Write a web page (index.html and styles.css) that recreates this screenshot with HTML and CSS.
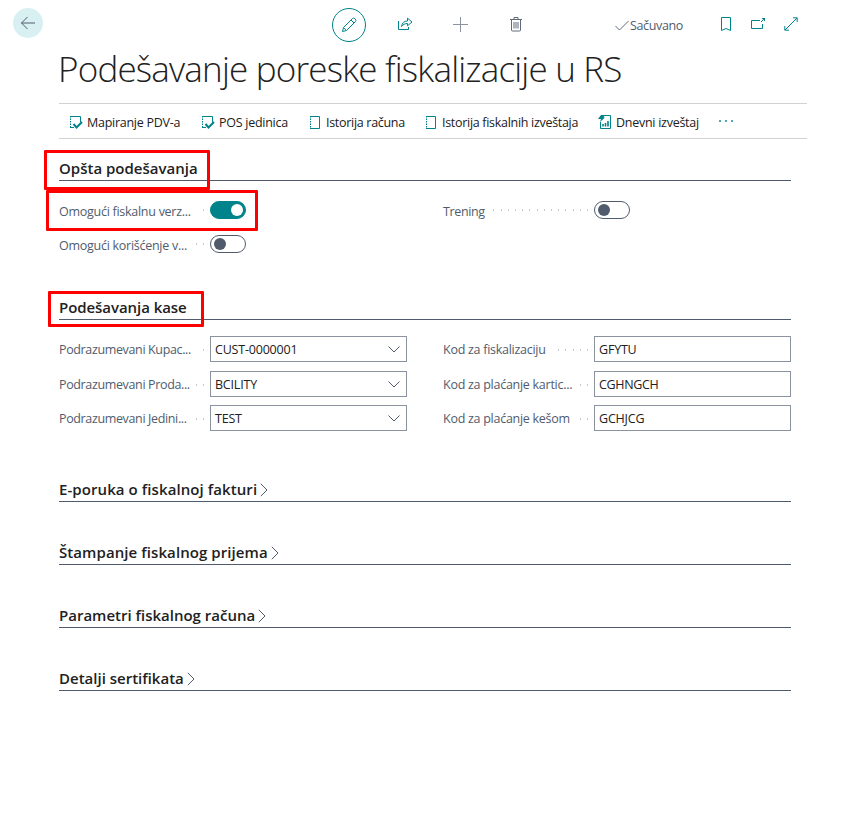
FILE: index.html
```html
<!DOCTYPE html>
<html lang="sr-Latn">
<head>
<meta charset="utf-8">
<title>Podešavanje poreske fiskalizacije u RS</title>
<link rel="stylesheet" href="styles.css">
</head>
<body>
<div class="page">
  <header class="topbar">
    <button class="back" aria-label="Nazad"><svg width="16" height="14" viewBox="0 0 16 14"><path d="M1.500 7H15M7.500 1 1.500 7l6 6"/></svg></button>
    <button class="edit" aria-label="Uredi"><svg width="16" height="16" viewBox="0 0 16 16"><path d="M1.500 14.500l1-4L11.300 1.700a1.800 1.800 0 0 1 2.600 0l.4.4a1.800 1.800 0 0 1 0 2.600L5.500 13.500zM2.500 10.500l3 3M10 3l3 3"/></svg></button>
    <svg class="ico share" width="15" height="14" viewBox="0 0 15 14"><path d="M.5 4v8.500h10V10M3.500 9.500C4 6 6 4 9.500 4V1.200L14 5 9.500 8.800V6.500C7 6.500 5 7.500 3.500 9.500z"/></svg>
    <svg class="ico gray plus" width="15" height="15" viewBox="0 0 15 15"><path d="M7.500 0v15M0 7.500h15"/></svg>
    <svg class="ico dark trash" width="12" height="15" viewBox="0 0 12 15"><path d="M0 2.500h12M4 2.500v-2h4v2M1.500 2.500v10.500q0 1 1 1h7q1 0 1-1V2.500M4 5v6.500M6 5v6.500M8 5v6.500"/></svg>
    <svg class="ico dark check" width="14" height="11" viewBox="0 0 14 11"><path d="M.5 6l4 4L13.500 1"/></svg>
    <span class="saved">Sačuvano</span>
    <svg class="ico mark" width="10" height="14" viewBox="0 0 10 14"><path d="M.5.5h9v13L5 11.500.5 13.500z"/></svg>
    <svg class="ico pop" width="15" height="12" viewBox="0 0 15 12"><path d="M9 2.500H.5v8h11V6M10 4l2.500-2.500"/><path class="fill" d="M10.500 0H14v3.500z"/></svg>
    <svg class="ico full" width="14" height="14" viewBox="0 0 14 14"><path d="M1 13L13 1M9 .8h4.200V5M.8 9v4.200H5"/></svg>
  </header>
  <h1>Podešavanje poreske fiskalizacije u RS</h1>
  <nav class="actions">
    <a class="a1"><svg class="ico" width="14" height="15" viewBox="0 0 14 15"><path d="M1 1.500h10.500v6M1 12.500h4"/><path class="dash" d="M1.500 1v12"/><path class="bold" d="M4.500 9l3 3.500L13 7"/></svg><span>Mapiranje PDV-a</span></a>
    <a class="a2"><svg class="ico" width="14" height="15" viewBox="0 0 14 15"><path d="M1 1.500h10.500v6M1 12.500h4"/><path class="dash" d="M1.500 1v12"/><path class="bold" d="M4.500 9l3 3.500L13 7"/></svg><span>POS jedinica</span></a>
    <a class="a3"><svg class="ico" width="12" height="15" viewBox="0 0 12 15"><path d="M1 1.500h9.500v12H1"/><path class="dash" d="M1.500 1v13"/></svg><span>Istorija računa</span></a>
    <a class="a4"><svg class="ico" width="12" height="15" viewBox="0 0 12 15"><path d="M1 1.500h9.500v12H1"/><path class="dash" d="M1.500 1v13"/></svg><span>Istorija fiskalnih izveštaja</span></a>
    <a class="a5"><svg class="ico" width="14" height="16" viewBox="0 0 14 16"><path d="M6 1.500h6.500v13H2.500V8"/><path class="bars" d="M5 12.500V10M7.500 12.500V9M10 12.500V7"/><path class="fill" d="M3 1h4L5.500 3.500H7L2 8l1-3H0z"/></svg><span>Dnevni izveštaj</span></a>
    <span class="more"><i></i><i></i><i></i></span>
  </nav>
  <main>
    <section class="group general">
      <h2><span>Opšta podešavanja</span></h2>
      <div class="fields switches">
        <div class="field"><label>Omogući fiskalnu verz...</label><i class="dots"></i><span class="control"><span class="toggle on"></span></span></div>
        <div class="field"><label class="tight">Trening</label><i class="dots"></i><span class="control"><span class="toggle"></span></span></div>
        <div class="field"><label>Omogući korišćenje v...</label><i class="dots"></i><span class="control"><span class="toggle"></span></span></div>
      </div>
    </section>
    <section class="group register">
      <h2><span class="kase">Podešavanja kase</span></h2>
      <div class="fields boxes">
        <div class="field"><label class="tight">Podrazumevani Kupac...</label><i class="dots"></i><span class="control box"><span>CUST-0000001</span><svg width="12" height="7" viewBox="0 0 12 7"><path d="M.5.5L6 6 11.500.5"/></svg></span></div>
        <div class="field"><label>Kod za fiskalizaciju</label><i class="dots"></i><span class="control box"><span>GFYTU</span></span></div>
        <div class="field"><label class="tight">Podrazumevani Proda...</label><i class="dots"></i><span class="control box"><span>BCILITY</span><svg width="12" height="7" viewBox="0 0 12 7"><path d="M.5.5L6 6 11.500.5"/></svg></span></div>
        <div class="field"><label>Kod za plaćanje kartic...</label><i class="dots"></i><span class="control box"><span class="snug">CGHNGCH</span></span></div>
        <div class="field"><label class="tight">Podrazumevani Jedini...</label><i class="dots"></i><span class="control box"><span>TEST</span><svg width="12" height="7" viewBox="0 0 12 7"><path d="M.5.5L6 6 11.500.5"/></svg></span></div>
        <div class="field"><label>Kod za plaćanje kešom</label><i class="dots"></i><span class="control box"><span>GCHJCG</span></span></div>
      </div>
    </section>
    <section class="folded"><h2><span class="wide">E-poruka o fiskalnoj fakturi</span><svg width="8" height="14" viewBox="0 0 8 14"><path d="M.8.8L7 7 .8 13.200"/></svg></h2></section>
    <section class="folded"><h2><span class="wide">Štampanje fiskalnog prijema</span><svg width="8" height="14" viewBox="0 0 8 14"><path d="M.8.8L7 7 .8 13.200"/></svg></h2></section>
    <section class="folded"><h2><span>Parametri fiskalnog računa</span><svg width="8" height="14" viewBox="0 0 8 14"><path d="M.8.8L7 7 .8 13.200"/></svg></h2></section>
    <section class="folded"><h2><span>Detalji sertifikata</span><svg width="8" height="14" viewBox="0 0 8 14"><path d="M.8.8L7 7 .8 13.200"/></svg></h2></section>
  </main>
  <div class="mark-box m1"></div>
  <div class="mark-box m2"></div>
  <div class="mark-box m3"></div>
</div>
</body>
</html>
```
FILE: styles.css
```css
* { box-sizing: border-box; }
body { margin: 0; background: #fff; color: #212121; font: 12.500px/18px "Open Sans", "Noto Sans", sans-serif; }
.page { position: relative; height: 816px; }
svg { display: block; flex: none; fill: none; stroke: #505c6d; stroke-width: 1; }
.ico { stroke: #00838a; }
.ico.gray { stroke: #8b93a0; }
.ico.dark { stroke: #606a7a; }
.dash { stroke-dasharray: 1.500 1; }
.ico .bold { stroke-width: 2; }
.ico .bars { stroke-width: 1.600; }
.ico .fill { fill: #00838a; stroke: none; }

.topbar { display: flex; align-items: flex-start; height: 48px; padding-left: 13px; }
.back, .edit { display: flex; align-items: center; justify-content: center; padding: 0; border: 0; border-radius: 50%; }
.back { width: 30px; height: 30px; margin-top: 8px; background: #d9f0f2; }
.edit { width: 34px; height: 34px; margin: 8px 0 0 289px; background: #fff; border: 1px solid #00838a; }
.edit svg { stroke: #00838a; }
.share { margin: 17px 0 0 32px; }
.plus { margin: 17px 0 0 40px; }
.trash { margin: 17px 0 0 42px; }
.check { margin: 20px 0 0 93px; }
.saved { width: 92px; margin-top: 17px; padding-left: 1px; color: #505c6d; letter-spacing: -.35px; }
.mark { margin-top: 17px; }
.pop { margin: 18px 0 0 20px; }
.full { margin: 17px 0 0 18px; }

h1 { height: 55px; margin: 0; padding-left: 58px; font-size: 35px; font-weight: 300; line-height: 41px; letter-spacing: -.81px; white-space: nowrap; }
.actions { display: flex; width: 748px; height: 36px; margin-left: 59px; border: solid #d2d2d2; border-width: 1px 0; letter-spacing: -.27px; white-space: nowrap; }
.actions a { display: flex; align-items: center; gap: 4px; padding: 2px 0 0 10px; }
.actions a span { padding-top: 1px; }
.a1 { width: 132px; }
.a2 { width: 108px; }
.a3 { width: 116px; }
.a4 { width: 173px; }
.a5 { width: 121px; }
.actions .a3, .actions .a4 { gap: 5px; letter-spacing: -.3px; }
.actions .more { display: flex; gap: 4px; padding: 16px 0 0 10px; }
.more i { width: 2px; height: 2px; background: #4fa9ae; }

main { width: 732px; margin-left: 59px; }
h2 { display: flex; align-items: center; gap: 3px; height: 26px; margin: 0; border-bottom: 1px solid #505c6d; font-size: 15px; font-weight: 600; line-height: 22px; white-space: nowrap; }
.wide { letter-spacing: .08px; }
.kase { letter-spacing: -.06px; }
.general { height: 139px; padding-top: 16px; }
.register { height: 156px; padding-top: 16px; }
.fields { display: grid; grid-template-columns: 348px 348px; column-gap: 36px; }
.switches { grid-auto-rows: 34px; padding-top: 12px; }
.boxes { grid-template-rows: 27px 26px 26px; row-gap: 8px; padding-top: 16px; }
.field { display: flex; align-items: center; color: #505c6d; }
.boxes .field { align-items: flex-start; }
.field label { flex: none; padding-top: 3px; letter-spacing: -.27px; white-space: nowrap; }
.boxes label { padding-top: 5px; }
.field label.tight { letter-spacing: -.36px; }
.dots { flex: 1; height: 2px; margin: 0 6px 0 6px; background: repeating-linear-gradient(to left, #c6cace 0 1px, transparent 1px 7.200px); }
.boxes .dots { margin-top: 13px; }
.control { flex: none; width: 197px; }
.box { display: flex; align-items: center; justify-content: space-between; height: 26px; padding: 2px 6px 0 4px; border: 1px solid #8b93a0; color: #212121; letter-spacing: -.2px; }
.box svg { margin-top: -1px; }
.snug { letter-spacing: -.35px; }
.toggle { display: block; width: 36px; height: 18px; padding: 2px 3px; border: 1px solid #505c6d; border-radius: 9px; }
.toggle::before { content: ""; display: block; width: 12px; height: 12px; border-radius: 50%; background: #505c6d; }
.toggle.on { background: #00838a; border-color: #00838a; }
.toggle.on::before { margin-left: 17px; background: #fff; }
.folded { height: 63px; padding-top: 42px; }
.folded h2 { padding-top: 1px; }
.folded svg { margin-top: 1px; }
.mark-box { position: absolute; border: 3px solid #f00; border-radius: 1px; }
.m1 { left: 44px; top: 150px; width: 166px; height: 40px; }
.m2 { left: 46px; top: 190px; width: 212px; height: 41px; }
.m3 { left: 48px; top: 291px; width: 156px; height: 36px; }
```
